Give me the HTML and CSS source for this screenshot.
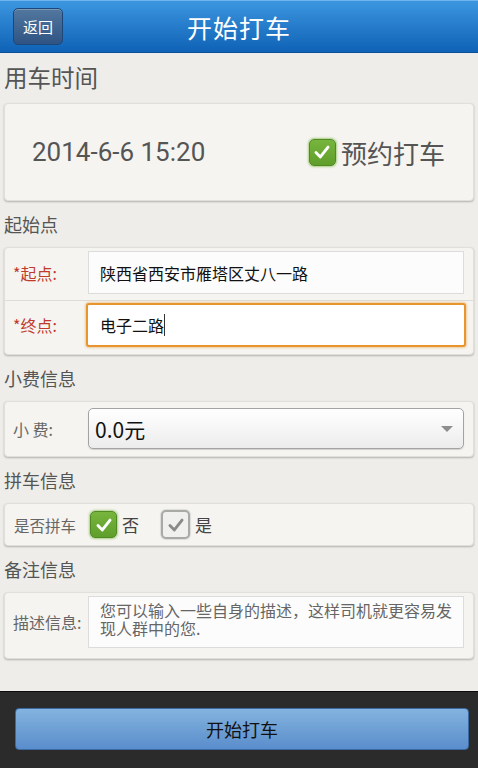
FILE: index.html
```html
<!DOCTYPE html>
<html lang="zh-CN">
<head>
    <meta charset="UTF-8">
    <meta name="viewport" content="width=device-width, initial-scale=1.0">
    <title>开始打车</title>
    <link rel="stylesheet" href="styles.css">
</head>
<body>

    <div class="header">
        <button class="back-button">返回</button>
        <h1>开始打车</h1>
    </div>

    <div class="main">
        <div class="section-title big">用车时间</div>
        <div class="card time-card">
            <span class="time">2014-6-6 15:20</span>
            <span class="check-item big">
                <span class="check on">
                    <svg viewBox="0 0 20 20"><path d="M4.5 10.5 L8.5 14.5 L15.5 5.5" /></svg>
                </span>
                预约打车
            </span>
        </div>

        <div class="section-title">起始点</div>
        <div class="card route-card">
            <div class="row">
                <label class="required">*起点:</label>
                <div class="field">陕西省西安市雁塔区丈八一路</div>
            </div>
            <div class="row">
                <label class="required">*终点:</label>
                <div class="field focused">电子二路<span class="caret"></span></div>
            </div>
        </div>

        <div class="section-title">小费信息</div>
        <div class="card tip-card">
            <div class="row">
                <label class="small">小 费:</label>
                <div class="select">0.0元<span class="arrow"></span></div>
            </div>
        </div>

        <div class="section-title">拼车信息</div>
        <div class="card pool-card">
            <label class="small">是否拼车</label>
            <span class="check-item">
                <span class="check on">
                    <svg viewBox="0 0 20 20"><path d="M4.5 10.5 L8.5 14.5 L15.5 5.5" /></svg>
                </span>否
            </span>
            <span class="check-item">
                <span class="check off">
                    <svg viewBox="0 0 20 20"><path d="M4.5 10.5 L8.5 14.5 L15.5 5.5" /></svg>
                </span>是
            </span>
        </div>

        <div class="section-title">备注信息</div>
        <div class="card note-card">
            <div class="row">
                <label class="small">描述信息:</label>
                <div class="textarea">您可以输入一些自身的描述，这样司机就更容易发现人群中的您.</div>
            </div>
        </div>
    </div>

    <div class="footer">
        <button class="submit-button">开始打车</button>
    </div>

</body>
</html>
```

FILE: styles.css
```css
html, body {
    height: 100%;
}

body {
    margin: 0;
    padding: 0;
    font-family: "Noto Sans CJK SC", Roboto, sans-serif;
    background: #eeede9;
    color: #555;
    display: flex;
    flex-direction: column;
}

.header {
    height: 53px;
    box-sizing: border-box;
    border-top: 1px solid #6fb4ec;
    border-bottom: 1px solid #0a4f98;
    background: linear-gradient(#3c96df, #0f62b6);
    display: flex;
    align-items: center;
    position: relative;
    justify-content: center;
}

.back-button {
    position: absolute;
    left: 13px;
    top: 7px;
    width: 50px;
    height: 37px;
    padding: 0;
    border: 1px solid #1c477a;
    border-radius: 5px;
    background: linear-gradient(#52779f, #2f5483);
    color: white;
    font-family: inherit;
    font-size: 15px;
    box-shadow: inset 0 1px 0 rgba(255, 255, 255, 0.25);
}

.header h1 {
    margin: 0;
    color: white;
    font-size: 25px;
    font-weight: normal;
    letter-spacing: 1px;
}

.main {
    flex: 1;
    padding: 0 4px;
}

.section-title {
    height: 46px;
    line-height: 46px;
    font-size: 18px;
    color: #555;
}

.section-title.big {
    height: 50px;
    line-height: 48px;
    font-size: 23.5px;
}

.card {
    background: #f5f4f0;
    border: 1px solid #e0dfdb;
    border-radius: 4px;
    box-shadow: 0 1px 2px rgba(0, 0, 0, 0.25);
}

.time-card {
    height: 96px;
    display: flex;
    align-items: center;
    justify-content: space-between;
    padding: 0 28px 0 27px;
}

.time {
    font-family: Roboto, sans-serif;
    font-size: 26px;
    color: #555;
}

.check-item {
    display: flex;
    align-items: center;
    font-size: 17px;
    color: #444;
}

.check-item.big {
    font-size: 26px;
    color: #555;
}

.check {
    width: 27px;
    height: 27px;
    border-radius: 5px;
    box-sizing: border-box;
    margin-right: 5px;
    display: flex;
    align-items: center;
    justify-content: center;
}

.check svg {
    width: 22px;
    height: 22px;
    fill: none;
    stroke-width: 2.6;
    stroke-linecap: round;
    stroke-linejoin: round;
}

.check.on {
    background: linear-gradient(#78b53e, #5f9e2b);
    border: 1px solid #4f8a22;
    box-shadow: 0 0 2px 1px rgba(120, 180, 60, 0.6);
}

.check.on svg {
    stroke: white;
}

.check.off {
    width: 29px;
    height: 29px;
    background: #f0f0ee;
    border: 2px solid #a9a9a7;
    box-shadow: 0 0 1px 1px rgba(0, 0, 0, 0.1);
}

.check.off svg {
    stroke: #8a8a88;
}

.row {
    display: flex;
    align-items: center;
    padding-right: 9px;
}

.route-card .row:first-child {
    padding-top: 3px;
    padding-bottom: 6px;
}

.route-card .row + .row {
    border-top: 1px solid #dddcd8;
    padding-top: 2px;
    padding-bottom: 7px;
}

.row label {
    width: 83px;
    flex-shrink: 0;
    padding-left: 8px;
    box-sizing: border-box;
}

.required {
    color: #c0392b;
    font-size: 16px;
}

.small {
    color: #666;
    font-size: 16px;
}

.field {
    flex: 1;
    height: 43px;
    box-sizing: border-box;
    border: 1px solid #dcdcdc;
    background: #fcfcfc;
    padding-left: 11px;
    display: flex;
    align-items: center;
    font-size: 16px;
    color: #111;
}

.field.focused {
    height: 44px;
    margin-left: -2px;
    margin-right: -2px;
    border: 2px solid #e7952e;
    border-radius: 3px;
    padding-left: 12px;
    background: white;
    box-shadow: 0 0 2px 1px rgba(230, 150, 50, 0.4);
}

.caret {
    display: inline-block;
    width: 1px;
    height: 22px;
    background: #333;
}

.tip-card .row {
    padding-top: 6px;
    padding-bottom: 7px;
}

.select {
    flex: 1;
    height: 41px;
    box-sizing: border-box;
    border: 1px solid #a3a3a3;
    border-radius: 5px;
    background: linear-gradient(#ffffff, #ececec);
    box-shadow: 0 1px 1px rgba(0, 0, 0, 0.15);
    padding-left: 6px;
    display: flex;
    align-items: center;
    justify-content: space-between;
    font-size: 21px;
    color: #111;
}

.arrow {
    width: 0;
    height: 0;
    margin-right: 10px;
    border-left: 6px solid transparent;
    border-right: 6px solid transparent;
    border-top: 6px solid #8e8e8e;
}

.pool-card {
    height: 41px;
    display: flex;
    align-items: center;
    padding-left: 9px;
}

.pool-card .small {
    font-size: 15.5px;
    margin-right: 14px;
}

.pool-card .check-item {
    margin-right: 22px;
}

.note-card .row {
    padding-top: 3px;
    padding-bottom: 10px;
}

.textarea {
    flex: 1;
    height: 52px;
    box-sizing: border-box;
    border: 1px solid #dcdcdc;
    background: #fcfcfc;
    padding: 4px 8px 0 11px;
    font-size: 16px;
    line-height: 18px;
    color: #666;
}

.footer {
    height: 77px;
    box-sizing: border-box;
    border-top: 1px solid #0b0b0b;
    background: #2b2b2b;
    padding: 16px 9px 0 15px;
}

.submit-button {
    width: 100%;
    height: 42px;
    border: 1px solid #3b6aa3;
    border-radius: 4px;
    background: linear-gradient(#83b3de, #5a8dcc);
    color: #111;
    font-family: inherit;
    font-size: 18px;
    cursor: pointer;
}
```
